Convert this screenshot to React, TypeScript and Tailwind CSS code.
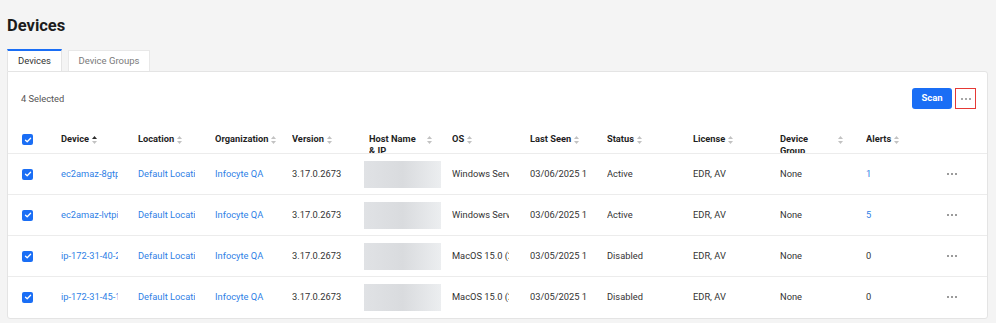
import React from 'react';

type Row = {
  device: string;
  os: string;
  lastSeen: string;
  status: string;
  alerts: number;
};

const rows: Row[] = [
  { device: 'ec2amaz-8gtpq1k', os: 'Windows Server 2019', lastSeen: '03/06/2025 10:42 AM', status: 'Active', alerts: 1 },
  { device: 'ec2amaz-lvtpi7r', os: 'Windows Server 2022', lastSeen: '03/06/2025 10:40 AM', status: 'Active', alerts: 5 },
  { device: 'ip-172-31-40-212', os: 'MacOS 15.0 (24A335)', lastSeen: '03/05/2025 11:02 PM', status: 'Disabled', alerts: 0 },
  { device: 'ip-172-31-45-118', os: 'MacOS 15.0 (24A335)', lastSeen: '03/05/2025 10:58 PM', status: 'Disabled', alerts: 0 },
];

const columns = [
  { label: 'Device', width: 'w-[77px]', active: true },
  { label: 'Location', width: 'w-[77px]' },
  { label: 'Organization', width: 'w-[77px]' },
  { label: 'Version', width: 'w-[77px]' },
  { label: 'Host Name & IP', width: 'w-[83px]' },
  { label: 'OS', width: 'w-[78px]' },
  { label: 'Last Seen', width: 'w-[77px]' },
  { label: 'Status', width: 'w-[86px]' },
  { label: 'License', width: 'w-[87px]' },
  { label: 'Device Group', width: 'w-[86px]' },
  { label: 'Alerts', width: 'w-[80px]' },
];

function SortIcon({ active }: { active?: boolean }) {
  return (
    <svg width="5" height="8" viewBox="0 0 5 8" className="shrink-0 mt-[3px]">
      <polygon points="2.5,0 5,3 0,3" fill={active ? '#2b2b2b' : '#c2c2c2'} />
      <polygon points="0,5 5,5 2.5,8" fill="#c2c2c2" />
    </svg>
  );
}

function Checkbox() {
  return (
    <span className="w-[11px] h-[11px] rounded-[2px] bg-[#1a6ef5] flex items-center justify-center">
      <svg width="8" height="8" viewBox="0 0 8 8">
        <path d="M1.5 4.2 L3.2 5.8 L6.6 2.2" stroke="white" strokeWidth="1.3" fill="none" strokeLinecap="round" strokeLinejoin="round" />
      </svg>
    </span>
  );
}

function Dots({ color = '#7a7a7a' }: { color?: string }) {
  return (
    <svg width="12" height="4" viewBox="0 0 12 4">
      <circle cx="2" cy="2" r="1" fill={color} />
      <circle cx="6" cy="2" r="1" fill={color} />
      <circle cx="10" cy="2" r="1" fill={color} />
    </svg>
  );
}

function Cell({ children, className = '' }: { children: React.ReactNode; className?: string }) {
  return <div className={`w-[57px] overflow-hidden whitespace-nowrap ${className}`}>{children}</div>;
}

export default function App() {
  return (
    <div className="min-h-[323px] bg-[#f4f4f4] pl-[7px] pr-[8px] pt-[15px] font-[family-name:Roboto,sans-serif] text-[9.3px] text-[#333]">
      <h1 className="text-[16.5px] leading-[22px] font-bold text-[#1c1c1c]">Devices</h1>

      {/* Tabs */}
      <div className="mt-[12px] flex items-end gap-[6px] h-[22px]">
        <div className="h-[22px] w-[55px] bg-white border-t-2 border-[#1a6ef5] border-x border-x-[#e4e4e4] flex items-center justify-center text-[9.5px] text-[#333]">
          Devices
        </div>
        <div className="h-[21px] w-[82px] bg-white border border-b-0 border-[#e8e8e8] flex items-center justify-center text-[9.5px] text-[#7a7a7a]">
          Device Groups
        </div>
      </div>

      {/* Card */}
      <div className="bg-white border border-[#e4e4e4] rounded-r-[3px] rounded-bl-[3px] pt-[16px]">
        <div className="flex items-center justify-between pl-[13px] pr-[11px] h-[21px]">
          <span className="text-[#555]">4 Selected</span>
          <div className="flex items-center gap-[3px]">
            <button className="h-[21px] w-[40px] rounded-[3px] bg-[#1a6ef5] text-white text-[9.5px] font-bold">Scan</button>
            <button className="h-[21px] w-[21px] border border-[#e53935] flex items-center justify-center">
              <Dots color="#8a8a8a" />
            </button>
          </div>
        </div>

        <table className="table-fixed mt-[20px] w-full border-collapse">
          <colgroup>
            <col className="w-[53px]" />
            {columns.map((c) => (
              <col key={c.label} className={c.width} />
            ))}
            <col />
          </colgroup>
          <thead>
            <tr className="border-b border-[#ececec]">
              <th className="h-[24px] align-top pt-[5px] pl-[14px]">
                <Checkbox />
              </th>
              {columns.map((c) => (
                <th key={c.label} className="h-[24px] align-top pt-[4px] p-0 text-left">
                  <div className="w-[63px] h-[20px] overflow-hidden flex items-start gap-[3px]">
                    <span className="font-bold text-[#1f1f1f] leading-[12px] min-w-0">{c.label}</span>
                    <SortIcon active={c.active} />
                  </div>
                </th>
              ))}
              <th />
            </tr>
          </thead>
          <tbody>
            {rows.map((r, i) => (
              <tr key={r.device} className={i < rows.length - 1 ? 'border-b border-[#ececec] h-[41px]' : 'h-[41px]'}>
                <td className="pl-[14px]">
                  <Checkbox />
                </td>
                <td><Cell className="text-[#2f7fe6]">{r.device}</Cell></td>
                <td><Cell className="text-[#2f7fe6]">Default Location</Cell></td>
                <td><Cell className="text-[#2f7fe6] w-[63px]">Infocyte QA</Cell></td>
                <td><Cell className="w-[63px]">3.17.0.2673</Cell></td>
                <td>
                  <div className="ml-[-5px] w-[77px] h-[27px] bg-gradient-to-r from-[#e0e2e5] via-[#d9dbde] to-[#eceef0]" />
                </td>
                <td><Cell>{r.os}</Cell></td>
                <td><Cell>{r.lastSeen}</Cell></td>
                <td><Cell>{r.status}</Cell></td>
                <td><Cell>EDR, AV</Cell></td>
                <td><Cell>None</Cell></td>
                <td>
                  <span className={r.alerts > 0 ? 'text-[#2f7fe6]' : 'text-[#333]'}>{r.alerts}</span>
                </td>
                <td>
                  <Dots />
                </td>
              </tr>
            ))}
          </tbody>
        </table>
      </div>
    </div>
  );
}
